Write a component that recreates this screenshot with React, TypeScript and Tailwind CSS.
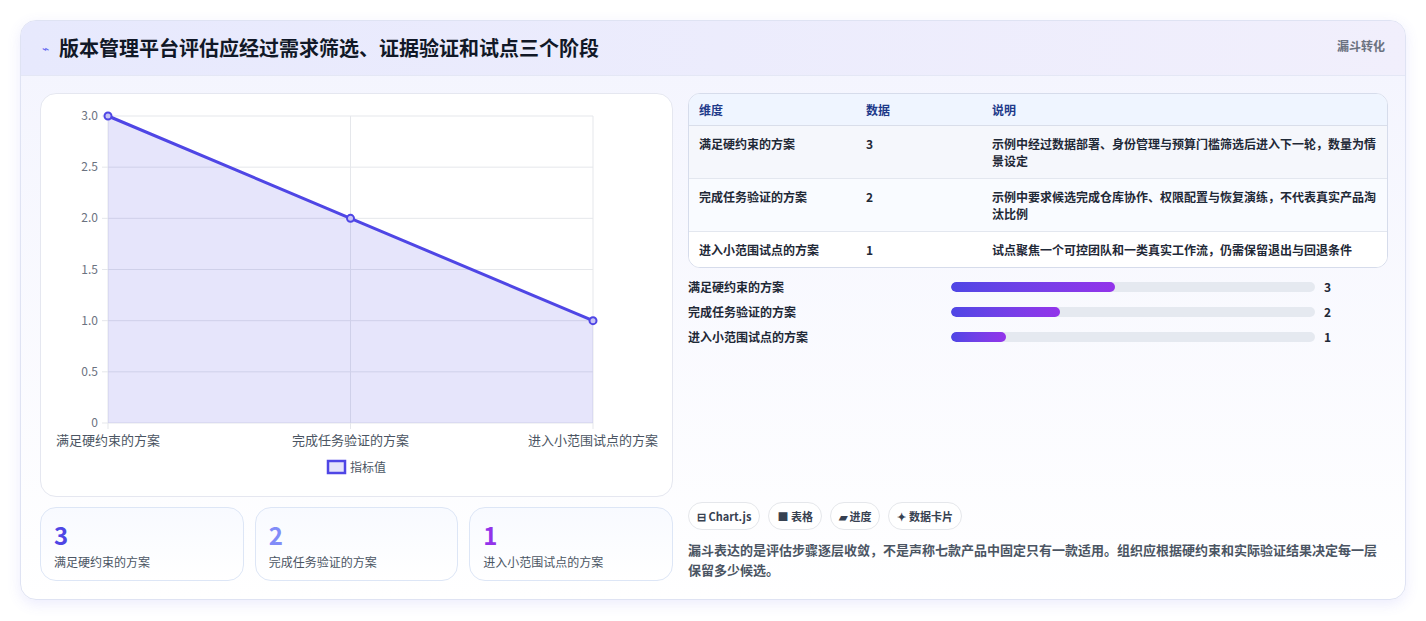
import React from "react";

const font = { fontFamily: '"Noto Sans CJK SC", "Noto Sans", sans-serif' };

function Chart() {
  const x0 = 67, x1 = 552, y0 = 22, y1 = 329;
  const ys = [3, 2.5, 2, 1.5, 1, 0.5, 0];
  const yp = (v: number) => y1 - (v / 3) * (y1 - y0);
  const xm = (x0 + x1) / 2;
  const pts = [[x0, yp(3)], [xm, yp(2)], [x1, yp(1)]];
  return (
    <svg width="632" height="401" viewBox="0 0 632 401" style={font}>
      {ys.map((v) => (
        <g key={v}>
          <line x1={x0 - 6} x2={x1} y1={yp(v)} y2={yp(v)} stroke="#e5e7eb" />
          <text x={x0 - 10} y={yp(v) + 4} textAnchor="end" fontSize="12" fill="#6b7280">
            {v === 0 ? "0" : v.toFixed(1)}
          </text>
        </g>
      ))}
      {[x0, xm, x1].map((x) => (
        <line key={x} x1={x} x2={x} y1={y0} y2={y1 + 6} stroke="#e5e7eb" />
      ))}
      <polygon
        points={`${x0},${y1} ${pts.map((p) => p.join(",")).join(" ")} ${x1},${y1}`}
        fill="rgba(79,70,229,0.14)"
      />
      <polyline points={pts.map((p) => p.join(",")).join(" ")} fill="none" stroke="#4f46e5" strokeWidth="3" />
      {pts.map((p, i) => (
        <circle key={i} cx={p[0]} cy={p[1]} r="3.5" fill="#c7c4f5" stroke="#4f46e5" strokeWidth="2" />
      ))}
      <text x={x0 - 52} y={351} fontSize="13" fill="#4b5563">满足硬约束的方案</text>
      <text x={xm} y={351} fontSize="13" fill="#4b5563" textAnchor="middle">完成任务验证的方案</text>
      <text x={x1 + 65} y={351} fontSize="13" fill="#4b5563" textAnchor="end">进入小范围试点的方案</text>
      <rect x={287} y={367} width={17} height={12} fill="#e5e3fb" stroke="#4f46e5" strokeWidth="2.5" />
      <text x={309} y={378} fontSize="12" fill="#4b5563">指标值</text>
    </svg>
  );
}

const rows = [
  ["满足硬约束的方案", "3", "示例中经过数据部署、身份管理与预算门槛筛选后进入下一轮，数量为情景设定"],
  ["完成任务验证的方案", "2", "示例中要求候选完成仓库协作、权限配置与恢复演练，不代表真实产品淘汰比例"],
  ["进入小范围试点的方案", "1", "试点聚焦一个可控团队和一类真实工作流，仍需保留退出与回退条件"],
];

export default function App() {
  return (
    <div className="w-[1426px] h-[621px] bg-white pt-[20px] px-[20px]" style={font}>
      <div className="w-[1386px] h-[580px] rounded-2xl border border-[#dfe3f3] shadow-[0_4px_14px_rgba(99,102,241,0.12)] overflow-hidden bg-gradient-to-b from-[#f3f4fe] to-white">
        <div className="h-[55px] flex items-center justify-between pl-[21px] pr-[20px] bg-gradient-to-r from-[#e7e9fd] to-[#f1effc] border-b border-[#e4e7f5]">
          <div className="flex items-center gap-[10px]">
            <span className="text-[#6366f1] text-[12px]">⌁</span>
            <span className="text-[20px] font-bold text-[#111827]">版本管理平台评估应经过需求筛选、证据验证和试点三个阶段</span>
          </div>
          <span className="text-[12px] font-semibold text-[#6b7280] self-start mt-[16px]">漏斗转化</span>
        </div>
        <div className="flex gap-[15px] pl-[19px] pt-[17px]">
          <div className="w-[633px] flex flex-col gap-[10px]">
            <div className="h-[404px] bg-white rounded-2xl border border-[#e5e7f0]">
              <Chart />
            </div>
            <div className="grid grid-cols-3 gap-[11px]">
              {[["3", "text-[#4f46e5]"], ["2", "text-[#818cf8]"], ["1", "text-[#9333ea]"]].map(([n, c], i) => (
                <div key={n} className="h-[74px] rounded-2xl border border-[#dde6f6] bg-gradient-to-b from-[#f8faff] to-white px-[13px] pt-[12px]">
                  <div className={`text-[24px] font-bold leading-[30px] ${c}`}>{n}</div>
                  <div className="text-[12px] text-[#4b5563] mt-[3px]">{rows[i][0]}</div>
                </div>
              ))}
            </div>
          </div>
          <div className="w-[700px] flex flex-col">
            <div className="rounded-xl border border-[#d6dceb] overflow-hidden bg-white">
              <div className="flex h-[32px] items-center bg-[#eff5ff] border-b border-[#d9deea] text-[12px] font-semibold text-[#1e3a8a]">
                <div className="w-[177px] pl-[10px]">维度</div>
                <div className="w-[126px]">数据</div>
                <div>说明</div>
              </div>
              {rows.map((r, i) => (
                <div key={i} className={`flex py-[9px] text-[12px] font-semibold text-[#1f2937] leading-[17px] ${i < 2 ? "border-b border-[#e3e7ef]" : ""} ${i === 1 ? "bg-[#f9fbff]" : i === 0 ? "bg-[#f5f7fc]" : "bg-white"}`}>
                  <div className="w-[177px] pl-[10px] shrink-0">{r[0]}</div>
                  <div className="w-[126px] shrink-0">{r[1]}</div>
                  <div className="pr-[6px]">{r[2]}</div>
                </div>
              ))}
            </div>
            <div className="flex flex-col gap-[8px] mt-[10px]">
              {rows.map((r, i) => (
                <div key={i} className="flex items-center h-[17px] text-[12px] font-semibold text-[#1f2937]">
                  <div className="w-[263px]">{r[0]}</div>
                  <div className="w-[364px] h-[10px] rounded-full bg-[#e5e9f0] overflow-hidden">
                    <div className="h-full rounded-full bg-gradient-to-r from-[#4f46e5] to-[#9333ea]" style={{ width: `${[45, 30, 15][i]}%` }} />
                  </div>
                  <div className="ml-[9px] font-bold">{r[1]}</div>
                </div>
              ))}
            </div>
            <div className="flex gap-[8px] mt-[157px]">
              {["⊟ Chart.js", "■ 表格", "▰ 进度", "✦ 数据卡片"].map((t) => (
                <span key={t} className="h-[28px] px-[8px] flex items-center rounded-full border border-[#e5e7eb] bg-white text-[11px] font-bold text-[#374151]">{t}</span>
              ))}
            </div>
            <p className="mt-[10px] text-[13px] leading-[20px] font-semibold text-[#4b5563]">
              漏斗表达的是评估步骤逐层收敛，不是声称七款产品中固定只有一款适用。组织应根据硬约束和实际验证结果决定每一层保留多少候选。
            </p>
          </div>
        </div>
      </div>
    </div>
  );
}
